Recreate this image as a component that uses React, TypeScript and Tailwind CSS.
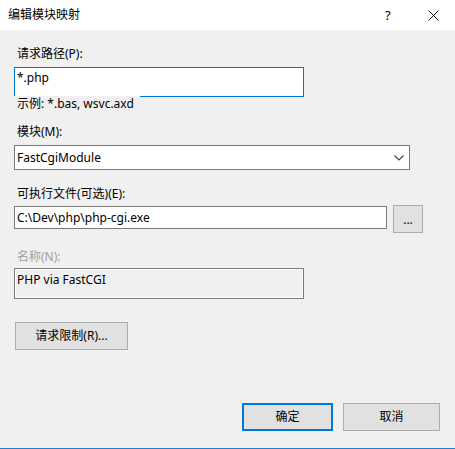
import React from "react";

const font = { fontFamily: '"Noto Sans", "Noto Sans CJK SC", sans-serif' };

export default function App() {
  return (
    <div
      className="w-[455px] h-[449px] bg-[#f0f0f0] flex flex-col border-b border-[#1883d7] text-[12px] text-black overflow-hidden"
      style={font}
    >
      {/* Title bar */}
      <div className="h-[30px] bg-white flex items-center pl-[8px] shrink-0">
        <span className="leading-[16px]">编辑模块映射</span>
        <span className="ml-[305px] leading-[16px] text-[13px]">?</span>
        <svg className="ml-[37px]" width="11" height="11" viewBox="0 0 11 11">
          <path d="M0.5 0.5 L10.5 10.5 M10.5 0.5 L0.5 10.5" stroke="#111" strokeWidth="1" fill="none" />
        </svg>
      </div>

      {/* Body */}
      <div className="flex flex-col pl-[14px] flex-1">
        <div className="mt-[16px] h-[16px] leading-[16px] pl-[3px]">请求路径(P):</div>
        <div className="mt-[5px] w-[290px] h-[30px] bg-white border border-[#0078d7] pl-[2px] pt-[2px] leading-[16px]">
          *.php
        </div>
        <div className="relative -mt-[1px] w-[126px] h-[16px] leading-[16px] pl-[3px] bg-[#f0f0f0]">
          示例: *.bas, wsvc.axd
        </div>

        <div className="mt-[12px] h-[16px] leading-[16px] pl-[3px]">模块(M):</div>
        <div className="mt-[5px] w-[396px] h-[25px] bg-white border border-[#7a7a7a] flex items-center pl-[2px] pr-[5px]">
          <span className="flex-1 leading-[16px]">FastCgiModule</span>
          <svg width="10" height="6" viewBox="0 0 10 6">
            <path d="M0.5 0.5 L5 5 L9.5 0.5" stroke="#444" strokeWidth="1.2" fill="none" />
          </svg>
        </div>

        <div className="mt-[16px] h-[16px] leading-[16px] pl-[3px]">可执行文件(可选)(E):</div>
        <div className="mt-[3px] flex items-start">
          <div className="mt-[1px] w-[373px] h-[23px] bg-white border border-[#7a7a7a] flex items-center pl-[2px] leading-[16px]">
            C:\Dev\php\php-cgi.exe
          </div>
          <div className="ml-[6px] w-[30px] h-[28px] bg-[#e1e1e1] border border-[#adadad] flex items-center justify-center leading-[16px] pt-[2px]">
            ...
          </div>
        </div>

        <div className="mt-[16px] h-[16px] leading-[16px] pl-[3px] text-[#a0a0a0]">名称(N):</div>
        <div className="mt-[3px] w-[290px] h-[31px] bg-[#f0f0f0] border border-[#7a7a7a] shadow-[inset_1px_1px_0_#ffffff,inset_-1px_-1px_0_#ffffff] pl-[2px] pt-[3px] leading-[16px]">
          PHP via FastCGI
        </div>

        <div className="mt-[23px] ml-[1px] w-[113px] h-[28px] bg-[#e1e1e1] border border-[#adadad] flex items-center justify-center leading-[16px]">
          请求限制(R)...
        </div>

        <div className="mt-auto mb-[17px] flex justify-end pr-[15px] gap-[10px]">
          <div className="w-[91px] h-[28px] bg-[#e1e1e1] border-2 border-[#0078d7] flex items-center justify-center leading-[16px]">
            确定
          </div>
          <div className="w-[97px] h-[28px] bg-[#e1e1e1] border border-[#adadad] flex items-center justify-center leading-[16px]">
            取消
          </div>
        </div>
      </div>
    </div>
  );
}
